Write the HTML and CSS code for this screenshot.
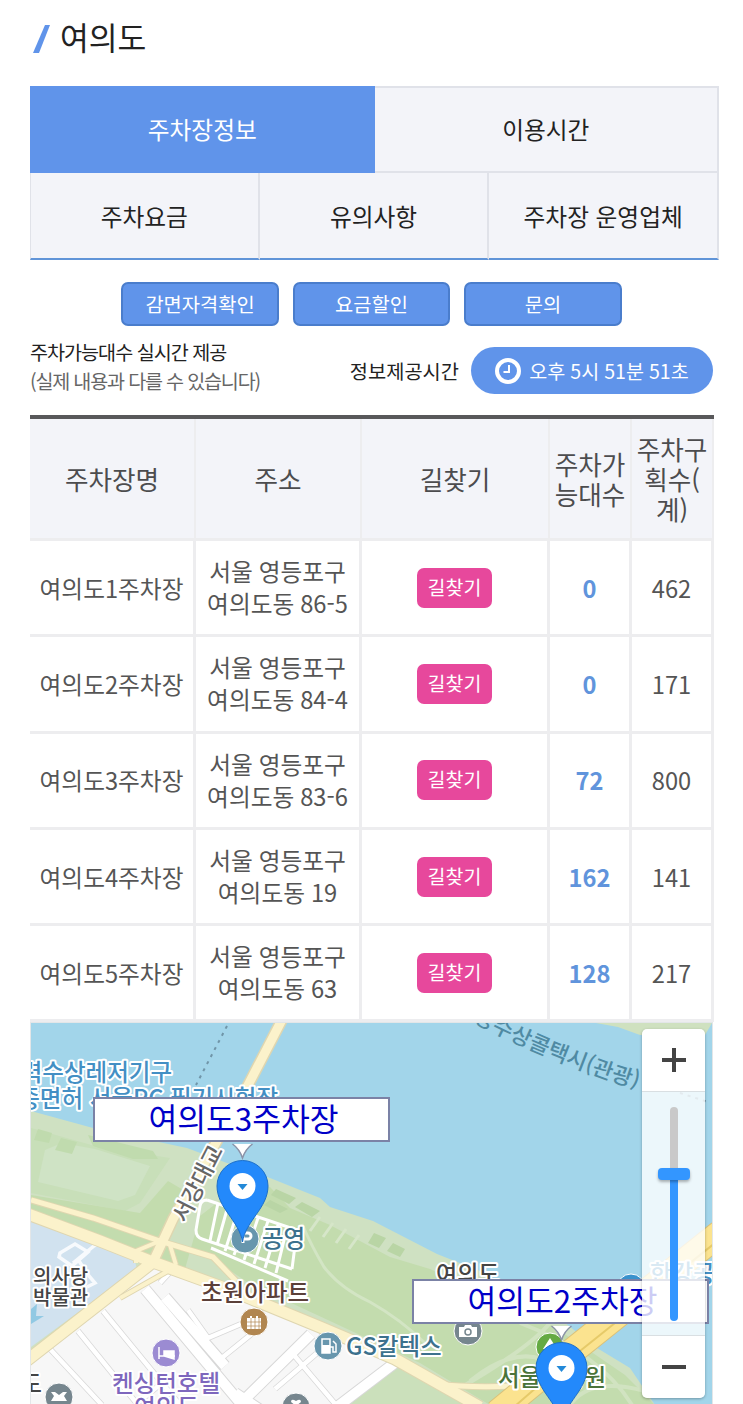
FILE: index.html
```html
<!DOCTYPE html>
<html lang="ko">
  <head>
    <meta charset="utf-8">
    <title>여의도 주차장</title>
    <link rel="stylesheet" href="styles.css">
  </head>
  <body>
    <h1>
      <svg class="slash" width="18" height="28" viewBox="0 0 18 28"><path d="M12 0h5L6 28H0z" fill="#6094ea"/></svg>
      여의도
    </h1>

    <div class="tabs">
      <a class="tab half on">주차장정보</a>
      <a class="tab half">이용시간</a>
      <a class="tab first">주차요금</a>
      <a class="tab">유의사항</a>
      <a class="tab">주차장 운영업체</a>
    </div>

    <div class="buttons">
      <a>감면자격확인</a>
      <a>요금할인</a>
      <a>문의</a>
    </div>

    <div class="info">
      <div class="notice">
        <p>주차가능대수 실시간 제공</p>
        <p class="small">(실제 내용과 다를 수 있습니다)</p>
      </div>
      <div class="time">
        <span>정보제공시간</span>
        <b>
          <svg width="28" height="28" viewBox="0 0 28 28" fill="none" stroke="#fff">
            <circle cx="14" cy="14" r="11" stroke-width="4"/>
            <path d="M15 8v7H9.500" stroke-width="2"/>
          </svg>
          오후 5시 51분 51초
        </b>
      </div>
    </div>

    <table>
      <colgroup>
        <col class="c1"><col class="c2"><col class="c3"><col class="c4"><col class="c5">
      </colgroup>
      <thead>
        <tr>
          <th>주차장명</th>
          <th>주소</th>
          <th>길찾기</th>
          <th>주차가<br>능대수</th>
          <th>주차구<br>획수(<br>계)</th>
        </tr>
      </thead>
      <tbody>
        <tr>
          <td>여의도1주차장</td>
          <td>서울 영등포구<br>여의도동 86-5</td>
          <td><a class="way">길찾기</a></td>
          <td class="count">0</td>
          <td>462</td>
        </tr>
        <tr>
          <td>여의도2주차장</td>
          <td>서울 영등포구<br>여의도동 84-4</td>
          <td><a class="way">길찾기</a></td>
          <td class="count">0</td>
          <td>171</td>
        </tr>
        <tr>
          <td>여의도3주차장</td>
          <td>서울 영등포구<br>여의도동 83-6</td>
          <td><a class="way">길찾기</a></td>
          <td class="count">72</td>
          <td>800</td>
        </tr>
        <tr>
          <td>여의도4주차장</td>
          <td>서울 영등포구<br>여의도동 19</td>
          <td><a class="way">길찾기</a></td>
          <td class="count">162</td>
          <td>141</td>
        </tr>
        <tr>
          <td>여의도5주차장</td>
          <td>서울 영등포구<br>여의도동 63</td>
          <td><a class="way">길찾기</a></td>
          <td class="count">128</td>
          <td>217</td>
        </tr>
      </tbody>
    </table>

    <div class="map">
      <svg class="tiles" width="681" height="382" viewBox="31 1022 681 382">
        <defs>
          <g id="pin">
            <path d="M-9-42H9Q3-37 0-29Q-3-37-9-42z" fill="#fff"/>
            <path d="M-10-42Q-3-37 0-28Q3-37 10-42" fill="none" stroke="#8b93a8" stroke-width="1.500"/>
            <path d="M0 56C-3 35-25.500 22-25.500 0A25.500 25.500 0 0 1 25.500 0C25.500 22 3 35 0 56z" fill="#2389fb" stroke="#1c6fc9"/>
            <circle r="13" fill="#fff"/>
            <path d="M-5-2H5L0 4z" fill="#2389d8"/>
          </g>
        </defs>

        <!-- river -->
        <rect x="31" y="1022" width="681" height="382" fill="#a2d5ea"/>
        <path d="M596 1022L618 1026L640 1034L705 1034L712 1022z" fill="#cfe1c0"/>

        <!-- riverside -->
        <path d="M31 1110L93 1127L187 1147L227 1162L270 1177L320 1197L330 1206L373 1220L437 1253L480 1270L560 1318L597 1347L630 1367L655 1404H31z" fill="#cfe1c2"/>
        <path d="M31 1127L95 1145L170 1157L140 1202L125 1210L31 1192z" fill="#c8dfb9"/>
        <path d="M45 1149L62 1142L95 1148L150 1165L135 1194L118 1200L38 1181z" fill="#cfe3c5"/>
        <path d="M38 1128l14 4-3 10-15-3zM61 1137l16 4-5 12-17-4zM88 1134l65 16 5 8-25 0-40-13z" fill="#c0dbae"/>
        <path d="M31 1194L140 1212L168 1180L185 1190L165 1240L200 1249L250 1283L330 1320L420 1362L490 1404H655L625 1374L590 1350L548 1322L430 1268L390 1256L330 1224L290 1207L270 1186L240 1184L200 1215L185 1268L31 1215z" fill="#c3dcae"/>
        <g fill="#b9d5a5">
          <path d="M276 1188l20 9-7 6-18-9zM302 1201l18 9-8 6-17-10zM270 1199l18 9-8 4-16-8zM374 1232l12 5-7 10-11-5zM393 1242l12 6-5 8-13-6z"/>
        </g>
        <path d="M302 1223Q312 1246 324 1266Q340 1287 370 1301Q400 1318 425 1342" fill="none" stroke="#d3e5c4" stroke-width="3"/>
        <path d="M320 1216l-10 14M333 1222l-10 14M346 1228l-10 14M359 1234l-10 14" stroke="#d6e6c9" stroke-width="3"/>
        <path d="M520 1322Q600 1352 632 1404M550 1322Q525 1352 430 1404M470 1380Q520 1340 555 1365M570 1404Q590 1375 645 1390" fill="none" stroke="#d1e3c1" stroke-width="4"/>

        <!-- assembly grounds and blocks -->
        <path d="M31 1218L134 1257L137 1268L31 1346z" fill="#d1e2ef"/>
        <path d="M31 1357L153 1267L230 1290L320 1328L392 1360L343 1404H31z" fill="#f7f7f7"/>
        <path d="M343 1404L396 1363L470 1404z" fill="#cbe0bb"/>
        <path d="M60 1252l15-9 13 8-16 14-13-9zM77 1257l12 18 6 7-8 4M73 1262l21-17 9-5" fill="none" stroke="#f7fafd" stroke-width="3.500"/>
        <path d="M31 1308l6-5-1 12 8 0-13 8z" fill="#91c9e3"/>

        <g fill="none" stroke="#d8d8d8">
          <path d="M103 1310L180 1404M78 1330L138 1404M50 1348L102 1404M188 1309L208 1337L241 1323M218 1360L265 1322M293 1353L336 1404M275 1388L323 1347M135 1404L162 1382M160 1282l12-13" stroke-width="6"/>
          <path d="M145 1288L252 1416M165 1296L225 1365M243 1400L311 1333M333 1409L396 1361M235 1392l30 20" stroke-width="12"/>
        </g>
        <g fill="none" stroke="#fff">
          <path d="M103 1310L180 1404M78 1330L138 1404M50 1348L102 1404M188 1309L208 1337L241 1323M218 1360L265 1322M293 1353L336 1404M275 1388L323 1347M135 1404L162 1382M160 1282l12-13" stroke-width="4.500"/>
          <path d="M145 1288L252 1416M165 1296L225 1365M243 1400L311 1333M333 1409L396 1361M235 1392l30 20" stroke-width="10"/>
        </g>

        <!-- main roads -->
        <g fill="none" stroke="#dfd6b0">
          <path d="M31 1199L93 1217L160 1240L213 1256L236 1280" stroke-width="7"/>
          <path d="M25 1212L100 1240L153 1261L230 1289L320 1326L395 1358L480 1406M153 1261L25 1361" stroke-width="13"/>
          <path d="M120 1297L168 1270M136 1262V1250L160 1240M170 1244L176 1264" stroke-width="6"/>
          <path d="M285 1013L245 1090L173 1218L153 1261" stroke-width="12"/>
          <path d="M436 1383Q470 1387 515 1385" stroke-width="7"/>
        </g>
        <g fill="none" stroke="#fbf2cb">
          <path d="M31 1199L93 1217L160 1240L213 1256L236 1280" stroke-width="5"/>
          <path d="M25 1212L100 1240L153 1261L230 1289L320 1326L395 1358L480 1406M153 1261L25 1361" stroke-width="11"/>
          <path d="M120 1297L168 1270M136 1262V1250L160 1240M170 1244L176 1264" stroke-width="4"/>
          <path d="M285 1013L245 1090L173 1218L153 1261" stroke-width="9"/>
          <path d="M436 1383Q470 1387 515 1385" stroke-width="5"/>
        </g>
        <path d="M497 1412L560 1360L720 1232" fill="none" stroke="#d9c27b" stroke-width="27"/>
        <path d="M497 1412L560 1360L720 1232" fill="none" stroke="#fbe38f" stroke-width="25"/>
        <path d="M507 1412L560 1366L720 1238" fill="none" stroke="#e6ca69" stroke-width="2"/>

        <!-- parking lot -->
        <g fill="none" stroke="#fff" stroke-width="3">
          <path d="M207 1199Q201 1199 200 1205L196 1229Q196 1236 202 1238L292 1268M207 1199L297 1229L292 1268M211 1247L288 1280M218 1202l-8 38M228 1205l-11 39M238 1209l-13 41M248 1214l-14 40M258 1217l-14 42M268 1220l-14 43M278 1224l-13 43M287 1227l-11 45"/>
        </g>

        <path d="M227 1025L196 1084" stroke="#7095a8" stroke-width="2" stroke-dasharray="3 5"/>
        <path d="M680 1092L708 1101" stroke="#7095a8" stroke-width="2" stroke-dasharray="3 5"/>

        <!-- place icons -->
        <g stroke="#fff">
          <circle cx="245" cy="1238" r="14" fill="#6796ad"/>
          <circle cx="254" cy="1321" r="14" fill="#b18650"/>
          <circle cx="166" cy="1352" r="14" fill="#9b8bd2"/>
          <circle cx="328" cy="1345" r="14" fill="#6796ad"/>
          <circle cx="59" cy="1396" r="14" fill="#76868e"/>
          <circle cx="296" cy="1406" r="14" fill="#76868e"/>
          <circle cx="468" cy="1330" r="14" fill="#76868e"/>
          <circle cx="550" cy="1346" r="14" fill="#65aa43"/>
          <circle cx="631" cy="1287" r="14" fill="#3992cd"/>
        </g>
        <path d="M243 1242v-10h5a3 3 0 0 1 0 6h-5" fill="none" stroke="#fff" stroke-width="3"/>
        <path d="M247 1328v-11h3v-2h2v2h4v-2h2v2h3v11z" fill="#fff"/>
        <path d="M251 1317v11M255 1317v11M259 1317v11M247 1321h14M247 1325h14" stroke="#b18650" stroke-width=".7"/>
        <path d="M159 1346v12M159 1355h16M174 1358v-8h-10v5z" fill="#fff" stroke="#fff" stroke-width="1.500"/>
        <path d="M322 1338h8v14h-8zM330 1346h3v5h3v-8l-3-3" fill="none" stroke="#fff" stroke-width="1.500"/>
        <path d="M322 1344h8v8h-8z" fill="#fff"/>
        <path d="M51 1391h4l4 3 4-3h4l-3 4 3 5h-16l3-5z" fill="#fff"/>
        <path d="M296 1405l-5-4q0-4 5-1q5-3 5 1z" fill="#fff"/>
        <path d="M459 1326h5l1-2h6l1 2h5v10h-18z" fill="#fff"/>
        <circle cx="468" cy="1331" r="3" fill="none" stroke="#76868e" stroke-width="1.500"/>
        <path d="M550 1337l7 11h-14z" fill="#fff"/>

        <!-- labels -->
        <g class="label">
          <text class="water" x="172" y="1080" text-anchor="end">력수상레저기구</text>
          <text class="water" x="278" y="1106" text-anchor="end">조종면허 서울PC 필기시험장</text>
          <text class="water" x="650" y="1281">한강공원</text>
          <text class="road" transform="translate(186 1223) rotate(-63)">서강대교</text>
          <text class="blue" x="262" y="1246">공영</text>
          <text class="blue" x="346" y="1354">GS칼텍스</text>
          <text class="brown" x="201" y="1300">초원아파트</text>
          <text class="dark" x="33" y="1283">의사당</text>
          <text class="dark" x="33" y="1304">박물관</text>
          <text class="violet" x="112" y="1391">켄싱턴호텔</text>
          <text class="violet" x="134" y="1415">여의도</text>
          <text class="dark big" x="436" y="1281">여의도</text>
          <text class="green" x="498" y="1385">서울색공원</text>
          <text class="dark big" x="42" y="1391" text-anchor="end">의도</text>
        </g>
        <path id="route" d="M450 1008Q535 1056 637 1088" fill="none"/>
        <text class="taxi"><textPath href="#route" startOffset="100%" text-anchor="end">한강수상콜택시(관광)</textPath></text>

        <use href="#pin" x="242.500" y="1185"/>
        <use href="#pin" x="561.500" y="1367"/>
      </svg>

      <div class="callout third">여의도3주차장</div>
      <div class="callout second">여의도2주차장</div>

      <div class="zoom">
        <button><svg width="24" height="24" viewBox="0 0 24 24"><path d="M0 12h24M12 0v24" stroke="#444" stroke-width="4"/></svg></button>
        <div class="slider"><i></i></div>
        <button><svg width="24" height="24" viewBox="0 0 24 24"><path d="M0 12h24" stroke="#444" stroke-width="4"/></svg></button>
      </div>
    </div>
  </body>
</html>
```
FILE: styles.css
```css
* {
  box-sizing: border-box;
}
body {
  margin: 0;
  padding: 0 24px 0 30px;
  height: 1404px;
  overflow: hidden;
  font-family: "Noto Sans CJK KR", "Noto Sans", sans-serif;
  color: #222;
  background: #fff;
}
h1 {
  display: flex;
  align-items: center;
  gap: 9px;
  height: 73px;
  margin: 0 0 13px;
  padding-left: 3px;
  font-size: 31.3px;
  font-weight: 400;
}
.slash {
  margin-top: 5px;
}

.tabs {
  display: grid;
  grid-template-columns: repeat(6, 1fr);
  grid-template-rows: 87px 87px;
  width: 689px;
}
.tab {
  grid-column: span 2;
  display: flex;
  align-items: center;
  justify-content: center;
  font-size: 23.7px;
  background: #f3f4f9;
  border: 1px solid #e0e2e9;
  border-width: 0 2px 2px 0;
  border-bottom-color: #6094d8;
}
.tab.first {
  border-left-width: 1px;
}
.tab.half {
  grid-column: span 3;
  padding-bottom: 1px;
  border-width: 2px 2px 2px 0;
  border-color: #e0e2e9;
}
.tab.on {
  color: #fff;
  background: #6094ea;
  border: 0;
}

.buttons {
  display: flex;
  justify-content: center;
  gap: 14px;
  margin: 22px 6px 0 0;
}
.buttons a {
  width: 157.5px;
  height: 44px;
  line-height: 40px;
  text-align: center;
  font-size: 19.8px;
  color: #fff;
  background: #6094ea;
  border: 2px solid #4a7dcc;
  border-radius: 7px;
}

.info {
  display: flex;
  justify-content: space-between;
  height: 89px;
  padding-right: 6px;
}
.notice {
  padding-top: 11px;
  font-size: 19.6px;
  letter-spacing: -1px;
  line-height: 29px;
}
.notice p {
  margin: 0;
}
.notice .small {
  color: #666;
  letter-spacing: -1.2px;
}
.time {
  display: flex;
  align-items: center;
  gap: 12px;
  height: 47px;
  margin-top: 21px;
  font-size: 19.8px;
}
.time b {
  display: flex;
  align-items: center;
  justify-content: center;
  gap: 7px;
  width: 242px;
  height: 47px;
  padding-right: 1px;
  font-size: 19.6px;
  font-weight: 400;
  word-spacing: -0.5px;
  color: #fff;
  background: #6094ea;
  border-radius: 24px;
}

table {
  width: 684px;
  table-layout: fixed;
  border-collapse: separate;
  border-spacing: 0;
  border-top: 4px solid #58585a;
  text-align: center;
  color: #555;
}
.c1 { width: 166px; }
.c2 { width: 166px; }
.c3 { width: 188px; }
.c4 { width: 82px; }
.c5 { width: 82px; }
th {
  height: 122px;
  padding: 1px 0 0;
  font-size: 25.6px;
  font-weight: 400;
  line-height: 30px;
  color: #4c4c4e;
  background: #f3f4f9;
  border: solid #ededef;
  border-width: 0 2px 3px 0;
}
td {
  height: 96.3px;
  padding: 0;
  font-size: 23.7px;
  line-height: 32px;
  border: solid #ededef;
  border-width: 0 3px 3px 0;
}
td:nth-child(2) {
  padding-bottom: 1px;
  word-spacing: -0.7px;
}
.way {
  display: inline-block;
  width: 75px;
  height: 40px;
  line-height: 38px;
  vertical-align: middle;
  font-size: 19.5px;
  color: #fff;
  background: #e7489c;
  border-radius: 7px;
}
.count {
  font-weight: 700;
  color: #6094dc;
}

.map {
  position: relative;
  width: 683px;
  height: 384px;
  border: solid #e3e6e8;
  border-width: 1px 1px 0;
  overflow: hidden;
}
.tiles {
  display: block;
}
.label text {
  font-size: 22.5px;
  font-weight: 500;
  stroke: #fff;
  stroke-width: 4px;
  stroke-linejoin: round;
  paint-order: stroke;
}
.label .water { fill: #438fc4; font-size: 23.5px; }
.label .road { fill: #666; }
.label .blue { fill: #3c718d; font-size: 23.5px; }
.label .brown { fill: #5b4039; font-size: 23.5px; }
.label .dark { fill: #444; font-size: 20px; }
.label .dark.big { font-size: 23px; }
.label .violet { fill: #7e67bd; font-size: 23.5px; }
.label .green { fill: #4a733a; font-size: 23.5px; }
.taxi {
  font-size: 22px;
  font-weight: 500;
  fill: #4f8aa3;
}

.callout {
  position: absolute;
  width: 297px;
  height: 45px;
  padding-left: 4px;
  line-height: 37px;
  text-align: center;
  font-size: 31.3px;
  color: #0000c8;
  background: #fff;
  border: 2px solid #7b82a6;
}
.third {
  left: 62px;
  top: 74px;
}
.second {
  left: 381px;
  top: 256px;
}

.zoom {
  position: absolute;
  left: 611px;
  top: 6px;
  display: flex;
  flex-direction: column;
  width: 63px;
  height: 369px;
  border-radius: 5px;
  overflow: hidden;
  box-shadow: 0 1px 3px rgba(0, 0, 0, 0.3);
}
.zoom button {
  display: flex;
  align-items: center;
  justify-content: center;
  height: 62px;
  padding: 0;
  background: #fff;
  border: 0;
}
.slider {
  flex: 1;
  padding-top: 15px;
  background: rgba(255, 255, 255, 0.8);
  border: solid #d9dfe2;
  border-width: 1px 0;
}
.slider i {
  position: relative;
  display: block;
  width: 8px;
  height: 214px;
  margin: 0 auto;
  border-radius: 4px;
  background: linear-gradient(#c9c9c9 67px, #3396ff 67px);
}
.slider i::after {
  content: "";
  position: absolute;
  left: -12px;
  top: 61px;
  width: 32px;
  height: 12px;
  border-radius: 4px;
  background: #3396ff;
  box-shadow: 0 2px 3px rgba(0, 0, 0, 0.3);
}
```
